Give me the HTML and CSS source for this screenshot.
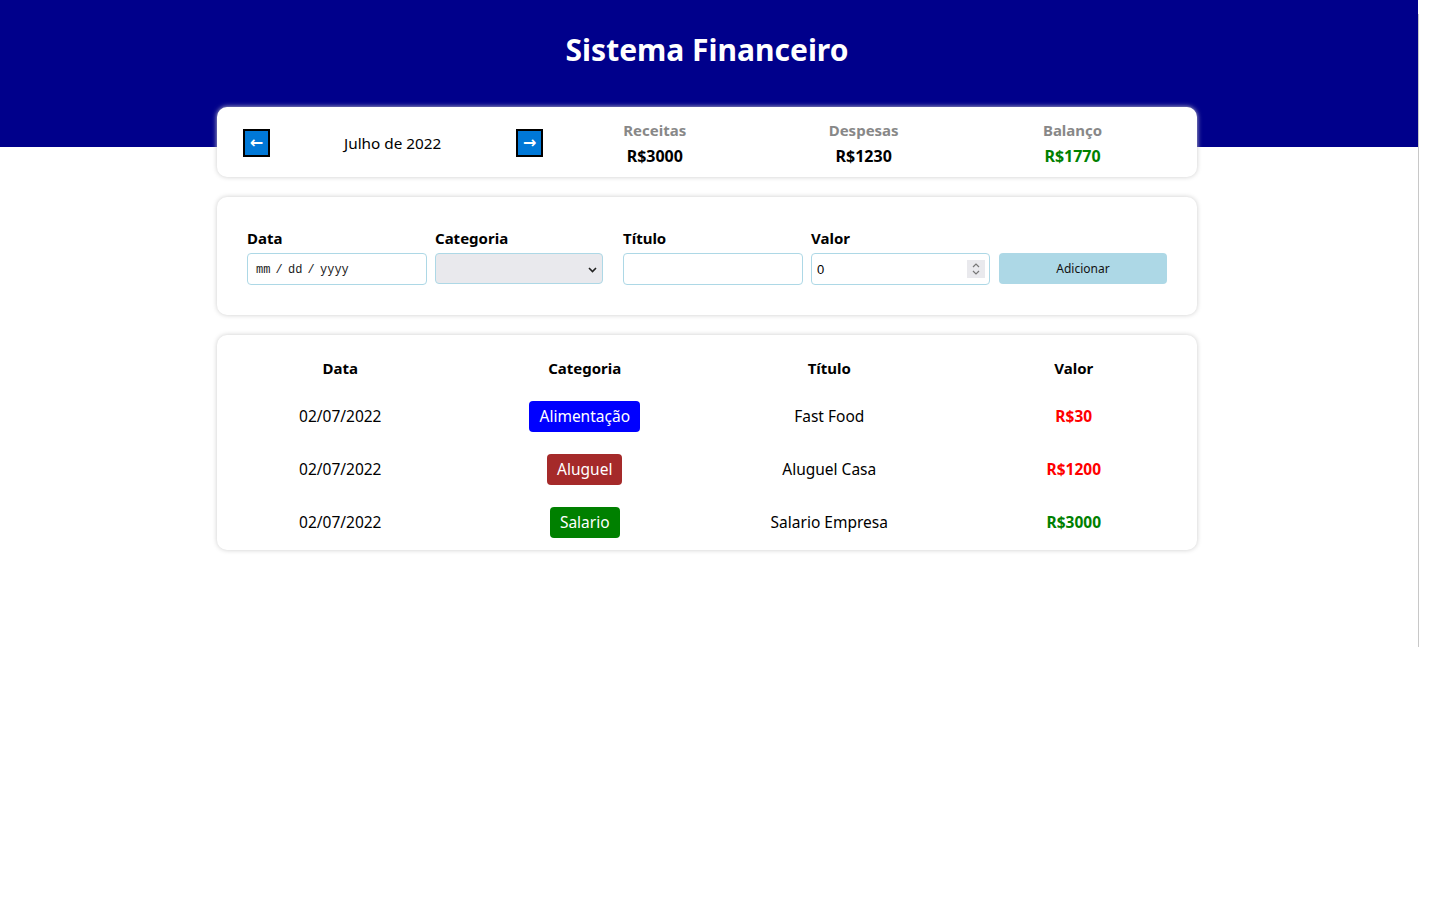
FILE: index.html
```html
<!DOCTYPE html>
<html lang="pt">
<head>
<meta charset="utf-8">
<title>Sistema Financeiro</title>
<link rel="stylesheet" href="styles.css">
</head>
<body>
<div class="page">
  <div class="app">
    <header class="header">
      <h1 class="header-title">Sistema Financeiro</h1>
    </header>
    <main class="body">
      <section class="card info-card">
        <div class="month-area">
          <button class="month-arrow prev" type="button">&larr;</button>
          <div class="month-title">Julho de 2022</div>
          <button class="month-arrow next" type="button">&rarr;</button>
        </div>
        <div class="resume-area">
          <div class="resume-item">
            <div class="resume-title">Receitas</div>
            <div class="resume-info">R$3000</div>
          </div>
          <div class="resume-item">
            <div class="resume-title">Despesas</div>
            <div class="resume-info">R$1230</div>
          </div>
          <div class="resume-item">
            <div class="resume-title">Balanço</div>
            <div class="resume-info positive">R$1770</div>
          </div>
        </div>
      </section>

      <section class="card form-card">
        <label class="input-label">
          <div class="input-title">Data</div>
          <input class="input date-input" type="text" placeholder="mm / dd / yyyy">
        </label>
        <label class="input-label">
          <div class="input-title">Categoria</div>
          <div class="select-wrap">
            <select class="select"><option></option></select>
            <svg class="select-chevron" width="9" height="6" viewBox="0 0 9 6"><path d="M1 1 L4.5 4.5 L8 1" fill="none" stroke="#222" stroke-width="1.6"/></svg>
          </div>
        </label>
        <label class="input-label">
          <div class="input-title">Título</div>
          <input class="input" type="text">
        </label>
        <label class="input-label">
          <div class="input-title">Valor</div>
          <div class="input number-box">
            <input class="number-field" type="text" value="0">
            <span class="spinner">
              <svg width="10" height="16" viewBox="0 0 10 16"><path d="M2 6 L5 3 L8 6" fill="none" stroke="#777" stroke-width="1.2"/><path d="M2 10 L5 13 L8 10" fill="none" stroke="#777" stroke-width="1.2"/></svg>
            </span>
          </div>
        </label>
        <label class="input-label">
          <div class="input-title">&nbsp;</div>
          <button class="add-button" type="button">Adicionar</button>
        </label>
      </section>

      <section class="card table-card">
        <table class="table">
          <thead>
            <tr>
              <th>Data</th>
              <th>Categoria</th>
              <th>Título</th>
              <th>Valor</th>
            </tr>
          </thead>
          <tbody>
            <tr>
              <td>02/07/2022</td>
              <td><span class="category cat-food">Alimentação</span></td>
              <td>Fast Food</td>
              <td class="value negative">R$30</td>
            </tr>
            <tr>
              <td>02/07/2022</td>
              <td><span class="category cat-rent">Aluguel</span></td>
              <td>Aluguel Casa</td>
              <td class="value negative">R$1200</td>
            </tr>
            <tr>
              <td>02/07/2022</td>
              <td><span class="category cat-salary">Salario</span></td>
              <td>Salario Empresa</td>
              <td class="value positive">R$3000</td>
            </tr>
          </tbody>
        </table>
      </section>
    </main>
  </div>
  <div class="edge"></div>
</div>
</body>
</html>
```
FILE: styles.css
```css
* { box-sizing: border-box; }

body {
  margin: 0;
  font-family: "Noto Sans", "Open Sans", sans-serif;
  color: #000;
  background: #fff;
}

.page {
  display: flex;
  align-items: flex-start;
}

.app {
  width: 1418px;
  padding-bottom: 40px;
}

.edge {
  width: 1px;
  height: 633px;
  margin-top: 14px;
  background: #c8c8c8;
}

.header {
  height: 147px;
  background: #00008b;
  padding-top: 29px;
  padding-right: 4px;
}

.header-title {
  margin: 0;
  text-align: center;
  color: #fff;
  font-size: 30px;
  line-height: 42px;
  font-weight: 700;
}

.body {
  width: 980px;
  margin: -40px auto 0;
  position: relative;
  left: -2px;
  display: flex;
  flex-direction: column;
  gap: 20px;
}

.card {
  background: #fff;
  border-radius: 10px;
  box-shadow: 0 0 5px #ccc;
}

/* info card */
.info-card {
  height: 70px;
  padding: 0 20px;
  display: flex;
  align-items: center;
}

.month-area {
  flex: 1 1 0;
  display: flex;
  align-items: center;
  justify-content: space-between;
  margin-top: 2px;
}

.month-arrow {
  width: 27px;
  height: 28px;
  padding: 0;
  background: #0078d7;
  border: 2px solid #000;
  color: #fff;
  font-size: 16px;
  line-height: 22px;
  font-family: "DejaVu Sans", sans-serif;
  font-weight: 700;
}

.month-arrow.prev { margin-left: 6px; }
.month-arrow.next { margin-right: 7px; }

.month-title {
  font-size: 15.3px;
  line-height: 20px;
  margin-right: 1px;
}

.resume-area {
  flex: 2 1 0;
  display: flex;
  padding-top: 1px;
}

.resume-item {
  flex: 1 1 0;
  text-align: center;
  font-weight: 700;
}

.resume-title {
  color: #888;
  font-size: 15px;
  line-height: 20px;
  margin-bottom: 6px;
}

.resume-info {
  font-size: 16px;
  line-height: 20px;
}

.positive { color: #008000; }
.negative { color: #ff0000; }

/* form card */
.form-card {
  display: flex;
  padding: 20px;
}

.input-label {
  flex: 1 1 0;
  margin: 10px;
  min-width: 0;
}

.input-title {
  font-weight: 700;
  font-size: 15px;
  line-height: 21px;
  margin-top: 1px;
  margin-bottom: 4px;
}

.input {
  box-sizing: content-box;
  width: 100%;
  height: 20px;
  padding: 5px;
  border: 1px solid #add8e6;
  border-radius: 4px;
  font-family: "Liberation Sans", sans-serif;
  font-size: 13px;
  background: #fff;
  display: block;
}

.date-input {
  font-family: "Liberation Mono", monospace;
  font-size: 12px;
  text-indent: 3px;
  padding-top: 6px;
  padding-bottom: 4px;
}

.date-input::placeholder {
  color: #222;
  opacity: 1;
  word-spacing: -2px;
}

.select-wrap {
  position: relative;
}

.select {
  appearance: none;
  -webkit-appearance: none;
  display: block;
  width: 100%;
  height: 31px;
  margin-top: 1px;
  border: 1px solid #add8e6;
  border-radius: 4px;
  background: #e9e9ed;
}

.select-chevron {
  position: absolute;
  right: 6px;
  top: 14px;
}

.number-box {
  display: flex;
  align-items: center;
  padding-right: 4px;
}

.number-field {
  flex: 1;
  min-width: 0;
  border: 0;
  padding: 0;
  outline: none;
  font-family: "Liberation Sans", sans-serif;
  font-size: 13px;
  background: transparent;
}

.spinner {
  width: 18px;
  height: 18px;
  background: #e9e9ed;
  display: flex;
  align-items: center;
  justify-content: center;
}

.add-button {
  display: block;
  width: 100%;
  height: 31px;
  margin-top: 1px;
  border: 0;
  border-radius: 4px;
  background: #add8e6;
  color: #111;
  font-family: "Noto Sans", sans-serif;
  font-size: 12px;
}

/* table card */
.table-card {
  padding-top: 10px;
}

.table {
  width: 100%;
  table-layout: fixed;
  border-spacing: 2px;
}

.table th {
  font-weight: 700;
  font-size: 15px;
  line-height: 22px;
  padding: 10px;
}

.table td {
  text-align: center;
  font-size: 15.5px;
  line-height: 31px;
  padding: 10px;
}

.value { font-weight: 700; }

.category {
  display: inline-block;
  padding: 0 10px;
  height: 31px;
  line-height: 31px;
  border-radius: 4px;
  color: #fff;
}

.cat-food { background: #0000ff; }
.cat-rent { background: #a52a2a; }
.cat-salary { background: #008000; }
```
